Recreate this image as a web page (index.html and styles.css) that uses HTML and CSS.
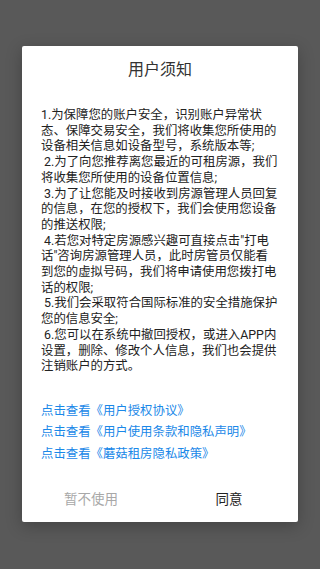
FILE: index.html
```html
<!DOCTYPE html>
<html lang="zh-CN">
<head>
  <meta charset="UTF-8">
  <meta name="viewport" content="width=device-width, initial-scale=1">
  <title>用户须知</title>
  <link rel="stylesheet" href="styles.css">
</head>
<body>
  <div class="dialog">
    <h2 class="title">用户须知</h2>

    <div class="content">
      <p>1.为保障您的账户安全，识别账户异常状态、保障交易安全，我们将收集您所使用的设备相关信息如设备型号，系统版本等;</p>
      <p>&nbsp;2.为了向您推荐离您最近的可租房源，我们将收集您所使用的设备位置信息;</p>
      <p>&nbsp;3.为了让您能及时接收到房源管理人员回复的信息，在您的授权下，我们会使用您设备的推送权限;</p>
      <p>&nbsp;4.若您对特定房源感兴趣可直接点击"打电话"咨询房源管理人员，此时房管员仅能看到您的虚拟号码，我们将申请使用您拨打电话的权限;</p>
      <p>&nbsp;5.我们会采取符合国际标准的安全措施保护您的信息安全;</p>
      <p>&nbsp;6.您可以在系统中撤回授权，或进入APP内设置，删除、修改个人信息，我们也会提供注销账户的方式。</p>
    </div>

    <div class="links">
      <a href="#">点击查看《用户授权协议》</a>
      <a href="#">点击查看《用户使用条款和隐私声明》</a>
      <a href="#">点击查看《蘑菇租房隐私政策》</a>
    </div>

    <div class="actions">
      <button class="btn btn-cancel">暂不使用</button>
      <button class="btn btn-ok">同意</button>
    </div>
  </div>
</body>
</html>
```

FILE: styles.css
```css
* {
  margin: 0;
  padding: 0;
  box-sizing: border-box;
  font-family: Roboto, "Noto Sans CJK SC", sans-serif;
}

body {
  width: 320px;
  height: 569px;
  background: #595959;
  padding: 46px 22px 0;
}

.dialog {
  width: 276px;
  background: #fff;
  border-radius: 2px;
  box-shadow: 0 4px 16px rgba(0, 0, 0, 0.25);
}

.title {
  padding-top: 12px;
  font-size: 16px;
  font-weight: normal;
  line-height: 24px;
  text-align: center;
  color: #333;
}

.content {
  margin-top: 25px;
  padding: 0 18px 0 19px;
  font-size: 12.4px;
  line-height: 15.7px;
  color: #222;
}

.links {
  display: flex;
  flex-direction: column;
  margin-top: 26px;
  padding: 0 19px;
}

.links a {
  font-size: 12.4px;
  line-height: 21.5px;
  color: #1a88e8;
  text-decoration: none;
}

.actions {
  display: flex;
  margin-top: 14px;
  padding-bottom: 4px;
}

.btn {
  flex: 1;
  height: 40px;
  border: none;
  background: none;
  font-size: 13.5px;
  cursor: pointer;
}

.btn-cancel {
  color: #a8a8a8;
}

.btn-ok {
  color: #222;
}
```
